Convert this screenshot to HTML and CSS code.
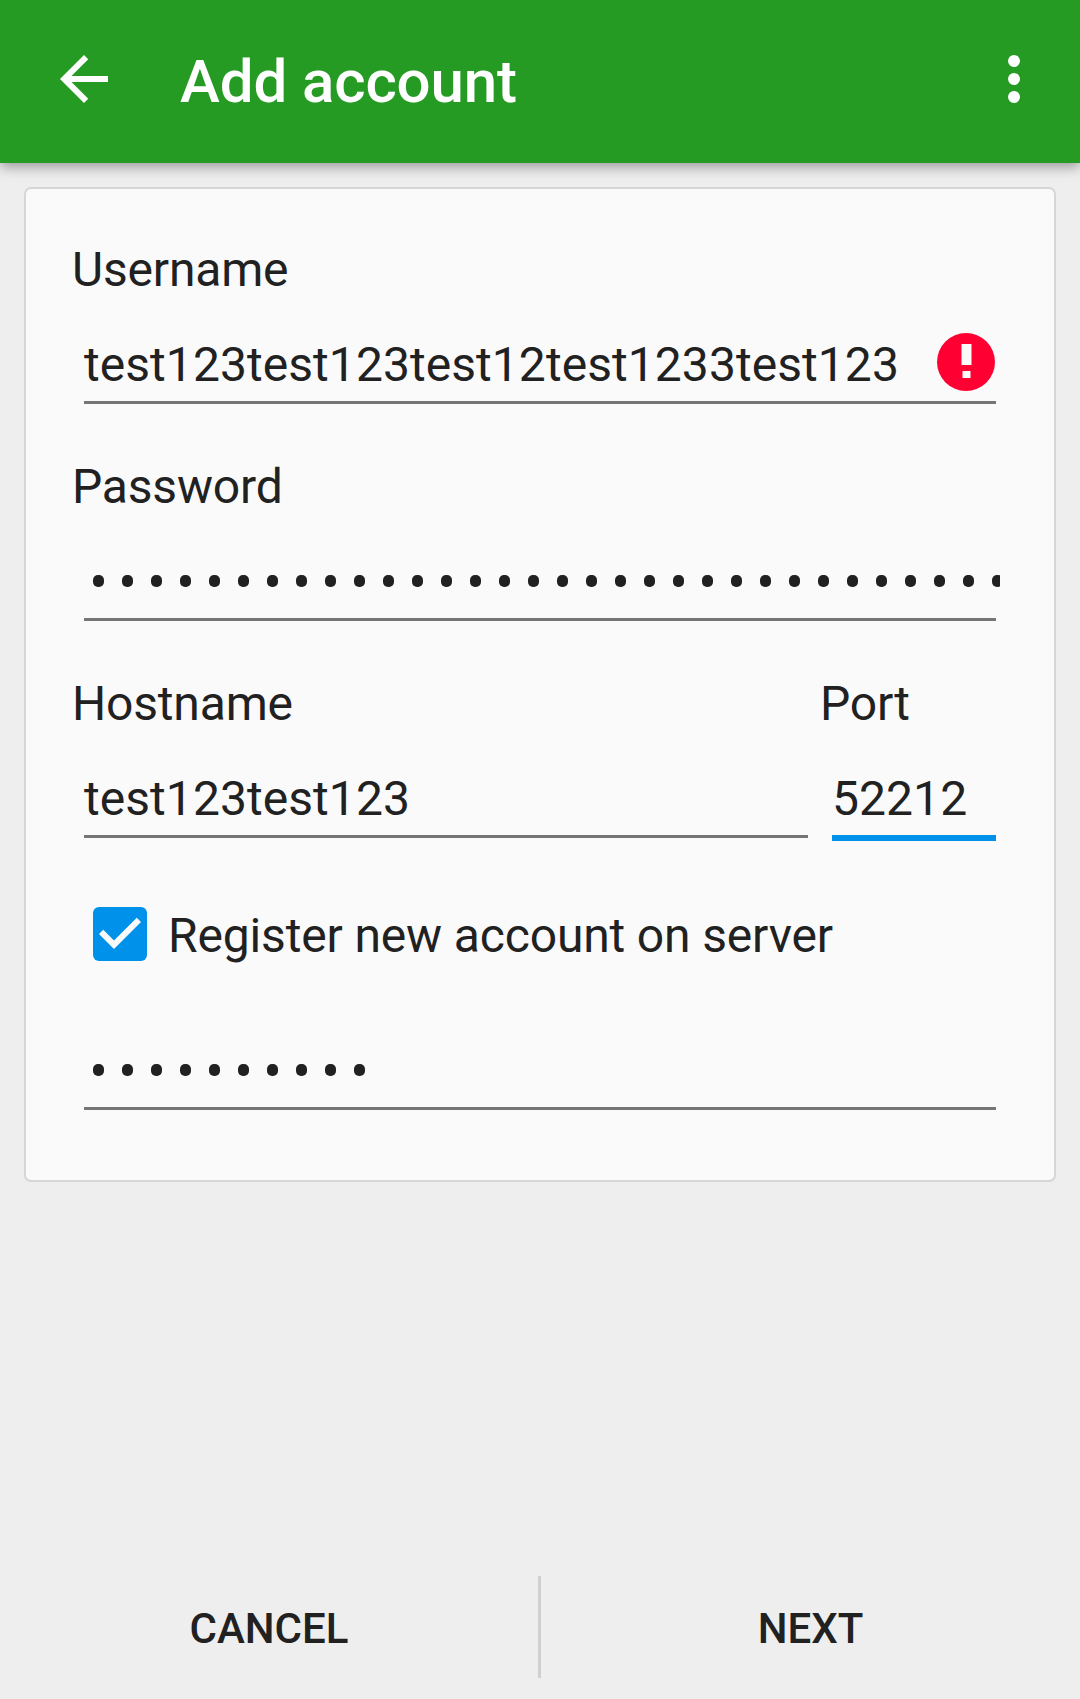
FILE: index.html
```html
<!DOCTYPE html>
<html lang="en">
<head>
<meta charset="utf-8">
<title>Add account</title>
<link rel="stylesheet" href="styles.css">
</head>
<body>
<header class="toolbar">
  <svg class="back" viewBox="4 4 16 16"><path d="M20 11H7.83l5.59-5.59L12 4l-8 8 8 8 1.41-1.41L7.83 13H20z"/></svg>
  <h1 class="title">Add account</h1>
  <svg class="more" viewBox="0 0 12 48"><circle cx="6" cy="6" r="6"/><circle cx="6" cy="24" r="6"/><circle cx="6" cy="42" r="6"/></svg>
</header>
<main class="card">
  <section class="group">
    <div class="label">Username</div>
    <div class="field"><span class="value">test123test123test12test1233test123</span>
      <svg class="error" viewBox="0 0 58 58"><circle cx="29" cy="29" r="29" fill="#ff0033"/><path d="M24.5 11h10v21h-10zM25.5 38h8v7h-8z" fill="#fafafa"/></svg>
    </div>
  </section>
  <section class="group">
    <div class="label">Password</div>
    <div class="field masked"><svg class="dots" height="14"><defs><pattern id="dot" width="29" height="14" patternUnits="userSpaceOnUse"><rect x="9" y="1" width="11" height="12" rx="5" fill="#212121"/></pattern></defs><rect width="916" height="14" fill="url(#dot)"/></svg></div>
  </section>
  <div class="row">
    <section class="group host">
      <div class="label">Hostname</div>
      <div class="field"><span class="value">test123test123</span></div>
    </section>
    <section class="group port">
      <div class="label">Port</div>
      <div class="field focused"><span class="value">52212</span></div>
    </section>
  </div>
  <div class="check">
    <svg class="box" viewBox="3 3 18 18"><rect x="3" y="3" width="18" height="18" rx="2" fill="#0091ea"/><path d="M10 17l-5-5 1.41-1.41L10 14.17l7.59-7.59L19 8z" fill="#fafafa"/></svg>
    <span class="caption">Register new account on server</span>
  </div>
  <div class="field masked"><svg class="dots" height="14"><rect width="290" height="14" fill="url(#dot)"/></svg></div>
</main>
<footer class="actions">
  <button class="action cancel">CANCEL</button>
  <span class="divider"></span>
  <button class="action">NEXT</button>
</footer>
</body>
</html>
```
FILE: styles.css
```css
* { box-sizing: border-box; }
body { margin: 0; height: 1699px; display: flex; flex-direction: column; background: #eee; color: #212121; font-family: Roboto, sans-serif; font-size: 48px; line-height: 56px; }
.toolbar { height: 163px; flex: none; padding: 0 60px 5px; display: flex; align-items: center; background: #259b24; color: #fff; fill: #fff; box-shadow: 0 4px 12px rgba(0,0,0,.36); }
.back { width: 48px; height: 48px; }
.title { margin: 0 auto 0 72px; padding-top: 5px; font-size: 60px; font-weight: 500; letter-spacing: -.1px; }
.more { width: 12px; height: 48px; }
.card { height: 995px; margin: 24px 24px 0; padding: 53px 46px 0; border: 2px solid #d6d6d6; border-radius: 7px; background: #fafafa; }
.group { height: 217px; }
.label { height: 56px; white-space: nowrap; letter-spacing: -.18px; }
.field { position: relative; height: 106px; margin: 0 12px; display: flex; align-items: flex-end; padding-bottom: 8px; border-bottom: 3px solid #757575; }
.masked { padding-bottom: 30px; }
.value { white-space: nowrap; letter-spacing: .06px; }
.error { position: absolute; right: 1px; bottom: 10px; width: 58px; height: 58px; }
.dots { width: 916px; flex: none; }
.row { display: flex; }
.host { width: 748px; }
.port { flex: 1; }
.check { height: 54px; margin: 14px 0 43px; display: flex; align-items: center; }
.box { width: 54px; height: 54px; margin: 0 21px 0 21px; }
.caption { padding-top: 3px; white-space: nowrap; letter-spacing: -.15px; }
.focused { height: 109px; border-bottom: 6px solid #0091ea; }
.actions { height: 102px; margin: auto 0 21px; display: flex; }
.action { flex: 1; padding: 2px 0 0; border: 0; background: none; color: #212121; font: 500 42px Roboto, sans-serif; }
.cancel { flex: none; width: 538px; }
.divider { width: 3px; background: #d0d0d0; }
```
